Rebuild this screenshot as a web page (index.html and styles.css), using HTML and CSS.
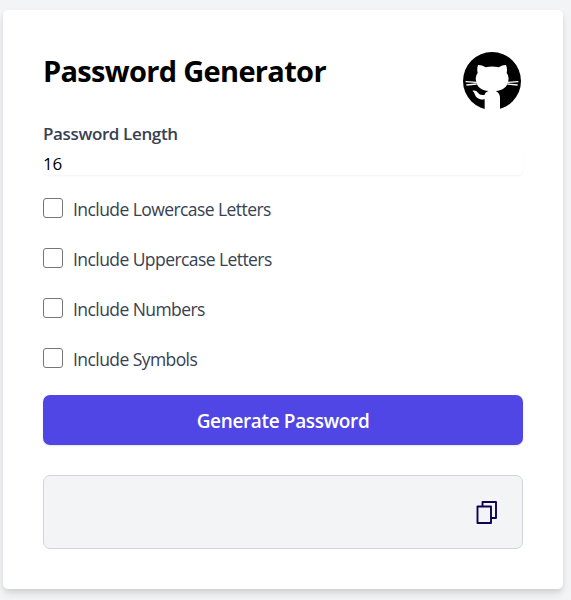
FILE: index.html
```html
<!DOCTYPE html>
<html lang="en">
<head>
<meta charset="utf-8">
<title>Password Generator</title>
<link rel="stylesheet" href="styles.css">
</head>
<body>
<main class="card">
  <header class="header">
    <h1 class="title">Password Generator</h1>
    <svg class="logo" viewBox="39 36 174 174" aria-hidden="true">
      <circle cx="126" cy="123" r="87"/>
      <path class="cat" d="M84 75Q94 74 107 82Q126 77 146 82Q159 74 168 75Q173 86 170 99Q178 108 175 122C172 142 158 150 137 153Q149 158 150 172V212H104V178C88 179 80 175 75 164Q72 155 67 152Q78 149 84 158Q90 167 104 164Q105 157 116 153C94 150 81 142 78 122Q75 108 83 99Q80 86 84 75Z"/>
      <path class="whiskers" d="M47 125L80 127M49 135L80 132M205 125L172 127M203 135L172 132"/>
    </svg>
  </header>
  <label class="length-label" for="length">Password Length</label>
  <input class="length" id="length" type="text" value="16">
  <div class="options">
    <label class="option"><input class="check" type="checkbox"><span>Include Lowercase Letters</span></label>
    <label class="option"><input class="check" type="checkbox"><span>Include Uppercase Letters</span></label>
    <label class="option"><input class="check" type="checkbox"><span>Include Numbers</span></label>
    <label class="option"><input class="check" type="checkbox"><span>Include Symbols</span></label>
  </div>
  <button class="generate" type="button">Generate Password</button>
  <div class="result">
    <svg class="copy" viewBox="0 0 22 24" aria-hidden="true">
      <path d="M6.500 6V2H20V18H15.500M1.500 6.500H15V23H1.500Z"/>
    </svg>
  </div>
</main>
</body>
</html>
```

FILE: styles.css
```css
* { box-sizing: border-box; }
body {
  margin: 0;
  height: 600px;
  overflow: hidden;
  padding: 10px 8px 11px 3px;
  background: #f3f4f6;
  font-family: "Open Sans", "Noto Sans", sans-serif;
}
.card {
  height: 579px;
  padding: 40px;
  background: #fff;
  border-radius: 5px;
  box-shadow: 0 5px 8px -1px rgba(0, 0, 0, .12), 0 2px 5px -1px rgba(0, 0, 0, .08);
}
.header {
  display: flex;
  justify-content: space-between;
  height: 71px;
}
.title {
  margin: 1px 0 0;
  font-size: 29px;
  line-height: 40px;
  font-weight: 700;
  letter-spacing: -.68px;
  white-space: nowrap;
}
.logo { width: 58px; height: 58px; margin: 2px 2px 0 0; }
.cat { fill: #fff; }
.whiskers { stroke: #fff; stroke-width: 4; fill: none; }
.length-label {
  display: block;
  height: 26px;
  font-size: 17px;
  line-height: 26px;
  font-weight: 600;
  letter-spacing: -.37px;
  color: #374151;
}
.length {
  display: block;
  width: 100%;
  height: 26px;
  padding: 2px 0 0;
  margin: 2px 0 0;
  border: 0;
  border-radius: 6px;
  background: #fff;
  font: 400 17px/24px "Open Sans", sans-serif;
  letter-spacing: -.3px;
  color: #000;
  box-shadow: 0 1px 2px rgba(0, 0, 0, .05);
}
.options {
  display: flex;
  flex-direction: column;
  gap: 20px;
  margin-top: 21px;
}
.option {
  display: flex;
  gap: 10px;
  height: 30px;
  font-size: 17.500px;
  font-weight: 400;
  line-height: 27px;
  letter-spacing: -.57px;
  color: #374151;
  white-space: nowrap;
}
.check {
  appearance: none;
  width: 20px;
  height: 20px;
  margin: 2px 0 0;
  border: 1.500px solid #767676;
  border-radius: 3px;
  background: #fff;
}
.generate {
  display: block;
  width: 100%;
  height: 50px;
  margin-top: 19px;
  padding: 2px 0 0;
  border: 0;
  border-radius: 7px;
  background: #4f46e5;
  color: #fff;
  font: 600 19px/48px "Open Sans", sans-serif;
  letter-spacing: -.35px;
  box-shadow: 0 1px 2px rgba(0, 0, 0, .1);
}
.result {
  display: flex;
  align-items: center;
  justify-content: flex-end;
  height: 74px;
  margin-top: 30px;
  padding-right: 24px;
  border: 1px solid #d1d5db;
  border-radius: 7px;
  background: #f3f4f6;
}
.copy {
  width: 22px;
  height: 24px;
  fill: none;
  stroke: #120052;
  stroke-width: 1.900;
  stroke-linejoin: round;
}
```
